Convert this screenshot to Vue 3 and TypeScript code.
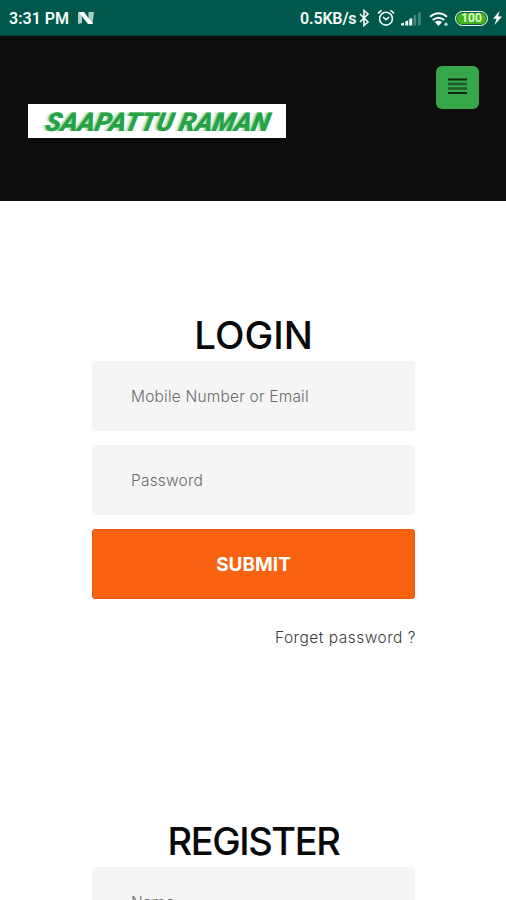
<template>
  <div class="screen">
    <div class="status-bar">
      <span class="time">3:31 PM</span>
      <svg class="icon-n" width="18" height="14" viewBox="0 0 18 14">
        <path d="M1 1.500h4v10.500l-4 1zM11.500 1H17l-1.500 12h-4z" fill="#a9cdc7" />
        <path d="M1.500 1h5.500L16 13h-5z" fill="#fff" />
      </svg>
      <div class="status-right">
        <span class="speed">0.5KB/s</span>
        <svg class="bluetooth" width="12" height="18" viewBox="0 0 12 18">
          <path d="M2 5l8 8-4 3.500v-15L10 5l-8 8" />
        </svg>
        <svg class="alarm" width="18" height="18" viewBox="0 0 18 18">
          <circle cx="9" cy="9.700" r="6.400" />
          <path d="M1 4.300l3.500-3M17 4.300l-3.500-3M6 8l3 2.700L12.200 8" />
        </svg>
        <svg class="signal" width="21" height="15" viewBox="0 0 21 15">
          <path d="M0 14.500v-2l3-1v3zM4.200 14.500v-4l3-1v5zM8.200 14.500V8l3-1v7.500z" fill="#eef8f6" />
          <path d="M12.500 14.500v-10l2.700-1v11zM17 14.500V2l2.700-1v13.500z" fill="#46877d" />
        </svg>
        <svg class="wifi" width="20" height="16" viewBox="0 0 20 16">
          <path d="M1 5.700Q9.500-1.300 18 5.700M3.800 9q5.700-4.600 11.400 0" />
          <path d="M5.800 11q3.700-2.600 7.400 0L9.500 15z" fill="#fff" stroke="none" />
          <circle cx="17" cy="13.300" r="1.700" fill="#b6d4cf" stroke="none" />
        </svg>
        <span class="battery">100</span>
        <svg class="bolt" width="9" height="14" viewBox="0 0 9 14">
          <path d="M6.500 0L0 7.700h3.600L1.500 14 9 5.600H5.200z" fill="#fff" />
        </svg>
      </div>
    </div>

    <header class="header">
      <div class="logo">
        <svg width="258" height="34" viewBox="0 0 258 34">
          <text
            class="logo-text"
            x="22"
            y="27.500"
            transform="skewX(-12)"
            textLength="224"
            lengthAdjust="spacingAndGlyphs"
          >SAAPATTU RAMAN</text>
        </svg>
      </div>
      <button class="menu-button" aria-label="Menu">
        <svg width="19" height="17" viewBox="0 0 19 17">
          <path d="M0 1.500h19M0 15h19" stroke="#10250f" stroke-width="2" />
          <path d="M0 6h19M0 10.500h19" stroke="#1e5a2a" stroke-width="2.400" />
        </svg>
      </button>
    </header>

    <main class="content">
      <form class="login" @submit.prevent>
        <h1 class="title login-title">LOGIN</h1>
        <input v-model="account" class="field account" type="text" placeholder="Mobile Number or Email" />
        <input v-model="password" class="field password" type="password" placeholder="Password" />
        <button class="submit" type="submit"><span>SUBMIT</span></button>
        <a class="forget">Forget password ?</a>
      </form>

      <form class="register" @submit.prevent>
        <h1 class="title register-title">REGISTER</h1>
        <input v-model="name" class="field" type="text" placeholder="Name" />
      </form>
    </main>
  </div>
</template>

<script setup lang="ts">
import { ref } from 'vue'

const account = ref<string>('')
const password = ref<string>('')
const name = ref<string>('')
</script>

<style>
body {
  margin: 0;
  overflow: hidden;
}
</style>

<style scoped>
.screen {
  width: 506px;
  height: 900px;
  overflow: hidden;
  background: #fff;
  font-family: Inter, 'Liberation Sans', sans-serif;
}

.status-bar {
  display: flex;
  align-items: center;
  box-sizing: border-box;
  height: 36px;
  padding: 1px 4px 0 9px;
  background: #00574b;
  border-bottom: 1px solid #003f36;
  color: #f4fbfa;
  font-family: Roboto, 'Liberation Sans', sans-serif;
  font-size: 16px;
  font-weight: 600;
}

.time {
  width: 61px;
  white-space: nowrap;
}

.icon-n {
  margin-left: 7px;
}

.status-right {
  display: flex;
  align-items: center;
  margin-left: auto;
}

.speed {
  width: 58px;
  letter-spacing: -0.15px;
  white-space: nowrap;
}

.bluetooth,
.alarm,
.wifi {
  fill: none;
  stroke: #f4fbfa;
  stroke-width: 1.6;
}

.alarm {
  margin-left: 7px;
}

.signal {
  margin-left: 6px;
}

.wifi {
  margin-top: 2px;
  margin-left: 7px;
  stroke-width: 2;
}

.battery {
  box-sizing: border-box;
  width: 33px;
  height: 15px;
  margin-left: 6px;
  border: 1.5px solid #f2fff0;
  border-radius: 8px;
  background: #43b51c;
  box-shadow: inset 0 0 0 1px #00574b;
  color: #e6ffd8;
  font-size: 12px;
  line-height: 13px;
  text-align: center;
}

.bolt {
  margin-left: 5px;
}

.header {
  display: flex;
  align-items: flex-start;
  justify-content: space-between;
  box-sizing: border-box;
  height: 165px;
  padding: 30px 27px 0 28px;
  background: #0d0d0d;
}

.logo {
  width: 258px;
  height: 34px;
  margin-top: 38px;
  background: #fff;
}

.logo svg {
  display: block;
}

.logo-text {
  fill: #25a244;
  font-family: Roboto, 'Liberation Sans', sans-serif;
  font-size: 26px;
  font-style: italic;
  font-weight: 900;
  text-shadow:
    -1px 0 rgba(37, 162, 68, 0.3),
    -2px 0 rgba(37, 162, 68, 0.22),
    -4px 0 rgba(37, 162, 68, 0.15);
}

.menu-button {
  display: flex;
  align-items: center;
  justify-content: center;
  width: 43px;
  height: 43px;
  padding: 0 0 3px;
  border: none;
  border-radius: 6px;
  background: #36a849;
}

.content {
  width: 323px;
  margin: 0 auto;
  padding: 111px 0 0 1px;
}

.login,
.register {
  display: flex;
  flex-direction: column;
}

.title {
  height: 49px;
  margin: 0;
  color: #080808;
  font-size: 38.5px;
  font-weight: 500;
  line-height: 46px;
  text-align: center;
  white-space: nowrap;
}

.register-title {
  font-size: 38px;
  letter-spacing: -1.4px;
}

.field {
  box-sizing: border-box;
  width: 100%;
  height: 70px;
  margin: 0 0 14px;
  padding: 0 39px;
  border: none;
  border-radius: 4px;
  background: #f5f5f5;
  font-family: Inter, 'Liberation Sans', sans-serif;
  font-size: 15.5px;
  font-weight: 300;
  letter-spacing: 0.2px;
  outline: none;
}

.field::placeholder {
  color: #6c6c6c;
  opacity: 1;
}

.submit {
  width: 100%;
  height: 70px;
  padding: 1px 0 0;
  border: none;
  border-radius: 4px;
  background: #f96210;
  box-shadow: inset 0 0 0 1px #ef5a0d;
  color: #fff;
  font-family: Inter, 'Liberation Sans', sans-serif;
  font-size: 19px;
  font-weight: 700;
}

.forget {
  align-self: flex-end;
  margin-top: 28px;
  margin-right: -1px;
  color: #3c3c3c;
  font-size: 15.5px;
  font-weight: 300;
  letter-spacing: 0.5px;
  line-height: 22px;
  white-space: nowrap;
}

.register {
  margin-top: 169px;
}
</style>
